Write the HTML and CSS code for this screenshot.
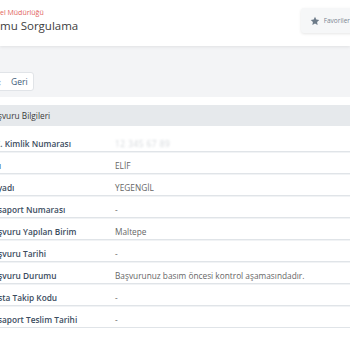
FILE: index.html
```html
<!DOCTYPE html>
<html lang="tr">
<head>
  <meta charset="UTF-8">
  <meta name="viewport" content="width=device-width, initial-scale=1.0">
  <title>Pasaport Başvuru Durumu Sorgulama</title>
  <link rel="stylesheet" href="styles.css">
</head>
<body>

  <header class="page-header">
    <div class="page-title">
      <div class="agency">el Müdürlüğü</div>
      <h1>mu Sorgulama</h1>
    </div>
    <button type="button" class="fav-button">
      <svg class="star" viewBox="0 0 24 24" width="10" height="10">
        <path d="M12 1.8l3.1 6.6 7.1.9-5.2 4.9 1.3 7.1L12 17.8l-6.3 3.5 1.3-7.1-5.2-4.9 7.1-.9z" fill="#6d7b89"/>
      </svg>
      Favoriler
    </button>
  </header>

  <div class="toolbar">
    <div class="wrap">
      <button type="button" class="back-button"><span class="chev">‹</span>Geri</button>
    </div>
  </div>

  <main class="panel">
    <div class="wrap">
      <div class="section-title">Başvuru Bilgileri</div>
      <table class="info-table">
        <tr><th>T.C. Kimlik Numarası</th><td><span class="masked">12 345 67 89</span></td></tr>
        <tr><th>Adı</th><td>ELİF</td></tr>
        <tr><th>Soyadı</th><td>YEGENGİL</td></tr>
        <tr><th>Pasaport Numarası</th><td>-</td></tr>
        <tr><th>Başvuru Yapılan Birim</th><td>Maltepe</td></tr>
        <tr><th>Başvuru Tarihi</th><td>-</td></tr>
        <tr><th>Başvuru Durumu</th><td>Başvurunuz basım öncesi kontrol aşamasındadır.</td></tr>
        <tr><th>Posta Takip Kodu</th><td>-</td></tr>
        <tr><th>Pasaport Teslim Tarihi</th><td>-</td></tr>
      </table>
    </div>
  </main>

</body>
</html>
```

FILE: styles.css
```css
* {
  margin: 0;
  padding: 0;
  box-sizing: border-box;
}

body {
  font-family: 'Open Sans', 'Noto Sans', sans-serif;
  background: #fff;
  color: #555;
  overflow: hidden;
}

.page-header {
  height: 46px;
  display: flex;
  justify-content: space-between;
  align-items: flex-start;
  padding-top: 8px;
  background: #fff;
  box-shadow: 0 1px 3px rgba(0, 0, 0, 0.08);
  position: relative;
  z-index: 1;
}

.agency {
  font-size: 7px;
  line-height: 10px;
  color: #e2645c;
}

.page-title h1 {
  font-size: 11.5px;
  line-height: 16px;
  font-weight: 400;
  color: #3d3d3d;
}

.fav-button {
  display: flex;
  align-items: center;
  gap: 4px;
  height: 25px;
  margin-right: -10px;
  padding: 0 10px 0 9px;
  border: none;
  border-radius: 3px;
  background: #f6f7f8;
  box-shadow: 0 1px 3px rgba(0, 0, 0, 0.1);
  font-family: inherit;
  font-size: 6.5px;
  color: #7a8592;
}

.toolbar {
  background: #f3f4f6;
  padding: 26px 0 6px;
}

.toolbar .wrap {
  display: flex;
}

.wrap {
  margin-left: -12px;
}

.back-button {
  display: flex;
  align-items: center;
  gap: 10px;
  height: 19px;
  padding: 0 5px 0 9px;
  background: #fff;
  border: 1px solid #e1e4e8;
  border-radius: 3px;
  font-family: inherit;
  font-size: 8.5px;
  color: #3e5a78;
}

.chev {
  color: #8a96a3;
  font-size: 10px;
}

.panel {
  background: #fff;
  padding-top: 8px;
}

.section-title {
  background: #e6e9ec;
  height: 21px;
  line-height: 21px;
  font-size: 8.3px;
  color: #3a3a3a;
}

.info-table {
  width: calc(100% + 12px);
  border-collapse: collapse;
  margin-top: 4px;
  font-size: 8.3px;
}

.info-table th,
.info-table td {
  text-align: left;
  line-height: 12px;
  padding: 8px 0 1px;
  border-bottom: 1px solid #e0e4e8;
  box-shadow: 0 1px 0 #f1f3f5;
}

.info-table th {
  width: 127px;
  font-weight: 600;
  color: #3b4c5e;
}

.info-table td {
  color: #666;
}

.masked {
  color: #d2d6da;
  filter: blur(0.8px);
  letter-spacing: 0.5px;
}
```
